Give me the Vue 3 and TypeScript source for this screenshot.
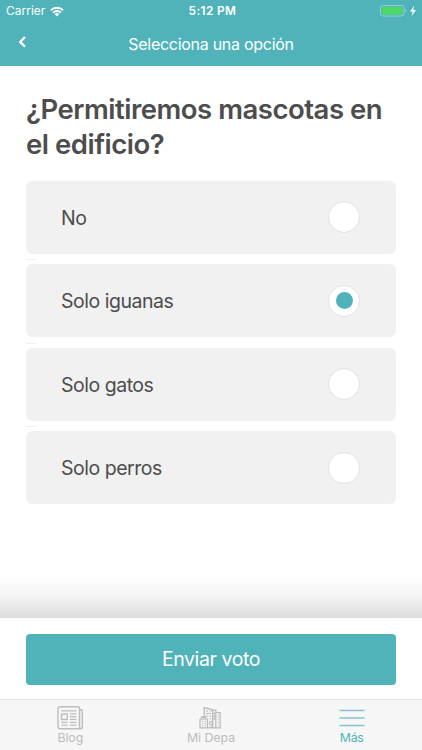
<script setup lang="ts">
import { ref } from 'vue'

const options = ['No', 'Solo iguanas', 'Solo gatos', 'Solo perros']
const selected = ref(1)
</script>

<template>
  <div class="screen">
    <header class="header">
      <div class="status">
        <div class="carrier">
          <span class="carrier-name">Carrier</span>
          <svg class="wifi" viewBox="0 0 14 11" width="14" height="11">
            <path d="M.2 3.6a9.7 9.7 0 0 1 13.6 0L12.5 5a7.8 7.8 0 0 0-11 0zM2.4 5.9a6.5 6.5 0 0 1 9.2 0l-1.4 1.4a4.5 4.5 0 0 0-6.4 0zM4.6 8.1a3.4 3.4 0 0 1 4.8 0L7 10.5z" fill="#fff" />
          </svg>
        </div>
        <span class="time">5:12 PM</span>
        <svg class="battery" viewBox="0 0 37 12" width="37" height="12">
          <rect x=".5" y=".5" width="23.5" height="10.5" rx="2.2" fill="none" stroke="#92d1d5" />
          <rect x="2" y="2" width="20.5" height="7.5" rx="1" fill="#4cd964" />
          <path d="M25.3 4c1.3.4 1.3 3.2 0 3.6z" fill="#a3d9dc" />
          <path d="M34.4.6 30 6.6h2.7l-1.3 4.6 4.6-6.2h-2.8z" fill="#fff" />
        </svg>
      </div>
      <nav class="nav">
        <svg class="back" viewBox="0 0 9 12" width="9" height="12">
          <path d="M7 1 2.2 5.9 7 10.8" fill="none" stroke="#fff" stroke-width="2.3" />
        </svg>
        <span class="nav-title">Selecciona una opción</span>
      </nav>
    </header>

    <main class="content">
      <h1 class="question">¿Permitiremos mascotas en<br />el edificio?</h1>
      <div class="options">
        <label v-for="(option, i) in options" :key="option" class="option" @click="selected = i">
          <span class="option-text">{{ option }}</span>
          <span class="radio"><span v-if="selected === i" class="dot"></span></span>
        </label>
      </div>
    </main>

    <div class="shade"></div>
    <section class="action">
      <button class="submit"><span>Enviar voto</span></button>
    </section>

    <footer class="tabs">
      <div class="tab">
        <svg viewBox="0 0 27 24" width="27" height="24" fill="none" stroke="#bdbdbd">
          <path d="M3 .8h18.2q1.3 0 1.3 1.3v18.4q0 2.2 2 2.2H3.2q-2.2 0-2.2-2.2V2.5Q1 .8 3 .8zM22.5 3.7h1.2q1.6 0 1.6 1.5v15.7q0 1.8-1.8 1.8" stroke-width="1.4" />
          <path d="M4.3 4.8h15M4.3 16.3h6.3M4.3 19.2h6.3M12.9 7.8h6.4M12.9 10.6h6.4M12.9 13.4h6.4M12.9 16.3h6.4M12.9 19.2h6.4" stroke-width="1.2" />
          <rect x="4.6" y="8" width="5.7" height="5.5" stroke-width="1.4" />
        </svg>
        <span class="tab-text blog">Blog</span>
      </div>
      <div class="tab">
        <svg viewBox="0 0 23 24" width="23" height="24" fill="none" stroke="#b9b9b9">
          <path d="M5.2 12.3V1.6l8.5 2.2v18M16.8 6.5h4.4v15.3h-4.4zM1 13h7.5v8.8H1zM2.6 12.6v-1.8h4.1v1.8M.5 21.8h21.2M16.8 6.5V4.1h-3" stroke-width="1.2" />
          <path d="M7 5h2m1.5 0h2M7 7.6h5.3M7 10.2h2m1.5 0h2M10.5 12.8h2M2.8 15.3h1.5m1.3 0h1.5M2.8 17.6h1.5m1.3 0h1.5M2.8 19.8h1.5m1.3 0h1.5M18.8 8.8h1M18.8 11.3h1M18.8 13.8h1M18.8 16.3h1M18.8 18.8h1M15.2 6v8" stroke-width="1" />
          <path d="M12 21.8v-3" stroke-width="1" />
          <circle cx="12" cy="17.2" r="1.6" stroke-width="1.1" />
        </svg>
        <span class="tab-text depa">Mi Depa</span>
      </div>
      <div class="tab active">
        <svg viewBox="0 0 26 24" width="26" height="24">
          <path d="M.5 4.5h25M.5 12h25M.5 19.5h25" stroke="#7fc6ca" stroke-width="1.6" />
        </svg>
        <span class="tab-text mas">Más</span>
      </div>
    </footer>
  </div>
</template>

<style>
body {
  margin: 0;
  background: #fff;
}
</style>

<style scoped>
.screen {
  width: 422px;
  height: 750px;
  display: flex;
  flex-direction: column;
  overflow: hidden;
  background: #fff;
  font-family: Inter, "Liberation Sans", sans-serif;
  color: #4d4d4d;
}
.header {
  flex: none;
  height: 66.4px;
  background: #50b3ba;
  color: #fff;
}
.status {
  height: 22px;
  padding: 0 5px 0 6px;
  display: grid;
  grid-template-columns: 1fr auto 1fr;
  align-items: center;
  font-size: 12px;
  line-height: 22px;
}
.carrier {
  display: flex;
  align-items: center;
  gap: 5px;
}
.carrier-name {
  font-size: 11.8px;
  letter-spacing: 0.1px;
}
.time {
  padding-left: 2px;
  font-weight: 600;
  font-size: 11.8px;
  letter-spacing: 0.4px;
}
.battery {
  justify-self: end;
}
.nav {
  height: 43px;
  display: grid;
  grid-template-columns: 28px 1fr 28px;
  align-items: center;
}
.back {
  margin: 0 0 3px 18px;
}
.nav-title {
  text-align: center;
  font-size: 16px;
  letter-spacing: -0.28px;
}
.content {
  flex: 1;
  padding: 26px 26px 0;
}
.question {
  margin: 0;
  height: 88.2px;
  font-size: 27.5px;
  line-height: 34.5px;
  font-weight: 600;
  letter-spacing: -0.48px;
  white-space: nowrap;
}
.options {
  display: grid;
  gap: 10.5px;
}
.option {
  position: relative;
  height: 73px;
  padding: 0 36px 0 35px;
  box-sizing: border-box;
  display: flex;
  align-items: center;
  justify-content: space-between;
  border-radius: 6px;
  background: #f1f1f1;
  font-size: 19.5px;
  letter-spacing: -0.48px;
}
.option-text {
  padding-top: 1px;
}
.option + .option::before {
  content: "";
  position: absolute;
  left: 0;
  top: -5px;
  width: 10px;
  height: 1px;
  background: #f0f0f0;
}
.radio {
  width: 32px;
  height: 32px;
  box-sizing: border-box;
  display: grid;
  place-items: center;
  border: 1px solid #e2e2e2;
  border-radius: 50%;
  background: #fff;
}
.dot {
  width: 17px;
  height: 17px;
  border-radius: 50%;
  background: #50b3ba;
}
.shade {
  flex: none;
  height: 43px;
  background: linear-gradient(#fff, #f4f4f4 50%, #dcdcdc);
}
.action {
  flex: none;
  height: 81px;
  padding: 15.5px 26px 0;
  box-sizing: border-box;
}
.submit {
  width: 100%;
  height: 51px;
  padding: 0;
  display: block;
  border: 0;
  border-radius: 4px;
  background: #50b3ba;
  color: #fff;
  font: 400 19.5px/51px Inter, "Liberation Sans", sans-serif;
  letter-spacing: -0.4px;
}
.tabs {
  flex: none;
  height: 51px;
  box-sizing: border-box;
  display: grid;
  grid-template-columns: repeat(3, 1fr);
  border-top: 1.5px solid #e5e5e5;
  background: #f6f6f6;
}
.tab {
  display: flex;
  flex-direction: column;
  align-items: center;
  padding-top: 6px;
  color: #bcbcbc;
}
.tab svg {
  flex: none;
}
.tab-text {
  font-size: 12.3px;
  line-height: 15px;
}
.blog {
  letter-spacing: -0.1px;
}
.mas {
  letter-spacing: -0.3px;
}
.active {
  color: #50b3ba;
}
</style>
